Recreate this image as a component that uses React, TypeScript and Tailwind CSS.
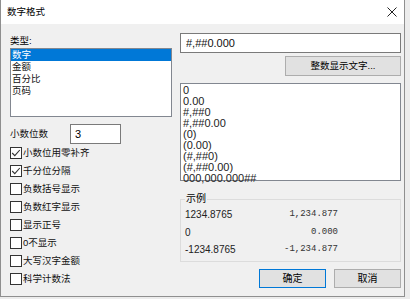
import { useState } from "react";

const cjk = { fontFamily: '"Liberation Sans", "Noto Sans CJK SC", sans-serif' };

const types = ["数字", "金额", "百分比", "页码"];
const formats = [
  "0",
  "0.00",
  "#,##0",
  "#,##0.00",
  "(0)",
  "(0.00)",
  "(#,##0)",
  "(#,##0.00)",
  "000,000.000##",
];
const options: [string, boolean][] = [
  ["小数位用零补齐", true],
  ["千分位分隔", true],
  ["负数括号显示", false],
  ["负数红字显示", false],
  ["显示正号", false],
  ["0不显示", false],
  ["大写汉字金额", false],
  ["科学计数法", false],
];
const samples = [
  ["1234.8765", "1,234.877"],
  ["0", "0.000"],
  ["-1234.8765", "-1,234.877"],
];

function Check({ label, checked }: { label: string; checked: boolean }) {
  const [on, setOn] = useState(checked);
  return (
    <label className="flex items-center h-[18px] cursor-default" onClick={() => setOn(!on)}>
      <span className="w-[12px] h-[12px] border border-[#333] bg-white flex items-center justify-center shrink-0">
        {on && (
          <svg width="10" height="10" viewBox="0 0 10 10">
            <path d="M1.2 5 L3.8 7.6 L8.8 2" fill="none" stroke="#333" strokeWidth="1.1" />
          </svg>
        )}
      </span>
      <span className="ml-[1px] text-[9.5px] leading-[12px] text-[#111]">{label}</span>
    </label>
  );
}

export default function App() {
  const [sel, setSel] = useState(0);
  return (
    <div className="w-[410px] h-[299px] bg-[#ececec] overflow-hidden" style={cjk}>
      <div className="w-[405px] h-[297px] border border-t-0 border-[#8f8f8f] bg-[#f0f0f0] flex flex-col">
        {/* 标题栏 */}
        <div className="h-[24px] bg-white flex items-center pl-[6px] pr-[7px] shrink-0">
          <span className="text-[9.5px] text-black">数字格式</span>
          <svg className="ml-auto" width="10" height="10" viewBox="0 0 10 10">
            <path d="M0.5 0.5 L9.5 9.5 M9.5 0.5 L0.5 9.5" stroke="#222" strokeWidth="1" />
          </svg>
        </div>

        <div className="flex pl-[9px]">
          {/* 左侧 */}
          <div className="w-[162px] flex flex-col">
            <div className="mt-[9px] h-[15px] text-[9.5px] leading-[15px] text-black">类型:</div>
            <div className="h-[69px] border border-[#828790] bg-white">
              {types.map((t, i) => (
                <div
                  key={t}
                  onClick={() => setSel(i)}
                  className={`h-[12px] text-[9.5px] leading-[12px] pl-[1px] ${
                    sel === i ? "bg-[#0078d7] text-white" : "text-[#111]"
                  }`}
                >
                  {t}
                </div>
              ))}
            </div>
            <div className="flex items-center mt-[7px] h-[20px]">
              <span className="w-[60px] text-[9.5px] text-[#111]">小数位数</span>
              <input
                defaultValue="3"
                className="w-[51px] h-[20px] border border-[#7a7a7a] bg-white text-[11px] px-[4px] outline-none"
              />
            </div>
            <div className="mt-[0px] flex flex-col">
              {options.map(([l, c]) => (
                <Check key={l} label={l} checked={c} />
              ))}
            </div>
          </div>

          {/* 右侧 */}
          <div className="ml-[8px] w-[221px] flex flex-col">
            <input
              defaultValue="#,##0.000"
              className="mt-[9px] h-[20px] border border-[#7a7a7a] bg-white text-[11px] px-[5px] outline-none text-[#111]"
            />
            <button className="self-end mt-[3px] w-[116px] h-[20px] border border-[#adadad] bg-[#e1e1e1] text-[9.5px] text-black">
              整数显示文字...
            </button>
            <div className="mt-[7px] h-[98px] border border-[#828790] bg-white pt-[1px] pl-[2px]">
              {formats.map((f) => (
                <div key={f} className="h-[11px] text-[11px] leading-[11px] text-[#222]">
                  {f}
                </div>
              ))}
            </div>

            {/* 示例 */}
            <div className="relative mt-[18px] h-[63px] border border-[#dcdcdc] pt-[6px] pl-[4px]">
              <span className="absolute left-[4px] top-[-8px] bg-[#f0f0f0] px-[1px] text-[10px] leading-[14px] text-black">
                示例
              </span>
              {samples.map(([a, b]) => (
                <div key={a} className="flex items-center h-[17.5px]">
                  <span className="w-[82px] text-[10px] text-[#222]">{a}</span>
                  <span
                    className="w-[71px] text-right text-[9px] text-[#333]"
                    style={{ fontFamily: '"Liberation Mono", monospace' }}
                  >
                    {b}
                  </span>
                </div>
              ))}
            </div>

            <div className="flex justify-end gap-[8px] mt-[7px]">
              <button className="w-[67px] h-[19px] border border-[#0078d7] bg-[#e1e1e1] text-[10px] text-black">
                确定
              </button>
              <button className="w-[67px] h-[19px] border border-[#adadad] bg-[#e1e1e1] text-[10px] text-black">
                取消
              </button>
            </div>
          </div>
        </div>
      </div>
    </div>
  );
}
